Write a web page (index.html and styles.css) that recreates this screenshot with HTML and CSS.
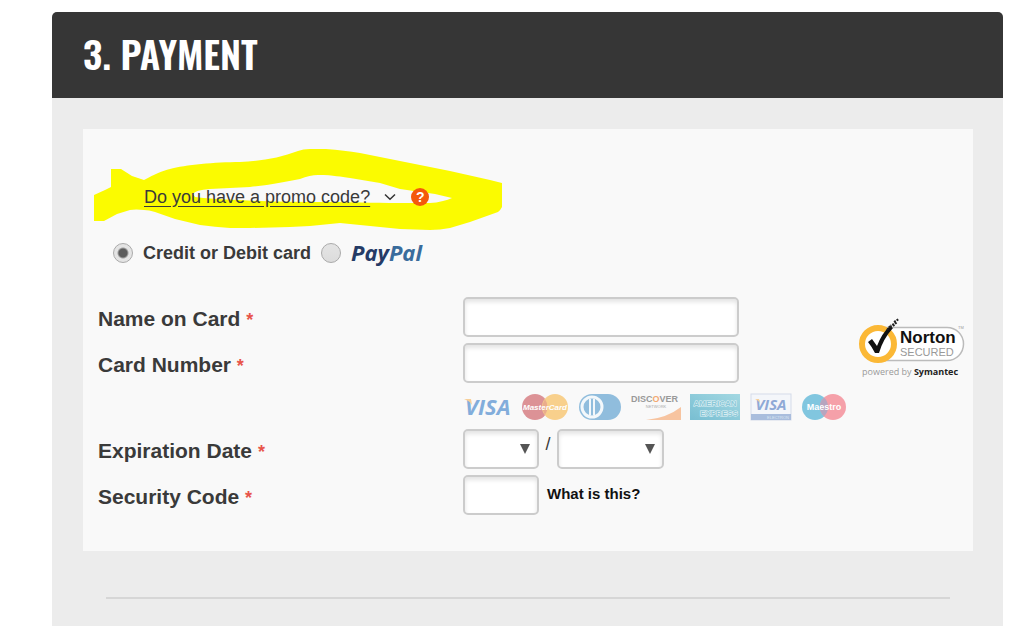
FILE: index.html
```html
<!DOCTYPE html>
<html lang="en">
<head>
    <meta charset="UTF-8">
    <meta name="viewport" content="width=device-width, initial-scale=1.0">
    <title>Checkout - Payment</title>
    <link rel="stylesheet" href="styles.css">
</head>
<body>
    <main class="checkout">
        <header class="step-header">
            <h1>3. PAYMENT</h1>
        </header>

        <div class="step-body">
            <form class="payment-box">
                <!-- Promo code -->
                <div class="promo">
                    <svg class="promo-marker" viewBox="94 149 409 82" width="409" height="82" aria-hidden="true">
                        <path fill="#fbfb00" fill-rule="evenodd" d="M94 195L105 190L111 187V169H121L132 176L144 180C155 174 162 171 170 169C185 165 215 162 240 162C260 161 280 158 298 151Q303 149 310 149C330 148 345 151 360 153L400 161L450 171L490 180L502 183V207Q500 211 498 212L470 222L450 228Q440 230 430 230L400 229L360 225L340 223L310 226L290 227L250 228L230 228Q215 227 200 225L175 219L155 212Q149 210 144 210Q136 209 130 210L117 214L104 221H94ZM193 194Q195 190 210 189L250 187C270 185 285 182 300 179Q310 175 318 175C335 175 340 177 350 178L380 183L400 189L435 194L452 198Q448 200 443 201Q436 203 430 203H400C370 203 350 202 330 202C300 202 270 202 240 200Q210 199 195 197Z"/>
                    </svg>
                    <a href="#" class="promo-link">Do you have a promo code?</a>
                    <svg class="promo-arrow" viewBox="0 0 12 8" width="12" height="8" aria-hidden="true">
                        <path d="M1 1.5L6 6.2L11 1.5" fill="none" stroke="#333" stroke-width="1.5"/>
                    </svg>
                    <button type="button" class="help" aria-label="Promo code help">?</button>
                </div>

                <!-- Payment method -->
                <div class="methods">
                    <input type="radio" name="method" id="method-card" checked>
                    <label for="method-card">Credit or Debit card</label>
                    <input type="radio" name="method" id="method-paypal">
                    <label for="method-paypal" class="paypal"><span>Pay</span><span class="pal">Pal</span></label>
                </div>

                <div class="details">
                    <div class="fields">
                        <div class="row">
                            <label class="row-label" for="card-name">Name on Card <span class="required">*</span></label>
                            <input class="field wide" type="text" id="card-name">
                        </div>
                        <div class="row">
                            <label class="row-label" for="card-number">Card Number <span class="required">*</span></label>
                            <input class="field wide" type="text" id="card-number">
                        </div>
                        <div class="row">
                            <span class="row-label"></span>
                            <div class="cards">
                                <!-- Visa -->
                                <svg viewBox="0 0 50 28" width="50" height="28">
                                    <text x="2" y="22" class="visa" font-size="22">VISA</text>
                                    <path d="M1 6H8L9 12Q7 8 1 6Z" fill="#f7cf98"/>
                                </svg>
                                <!-- MasterCard -->
                                <svg viewBox="0 0 46 28" width="46" height="28">
                                    <circle cx="13" cy="14" r="13" fill="#dc9296"/>
                                    <circle cx="33" cy="14" r="13" fill="#f8d08c"/>
                                    <path d="M23 6Q28 14 23 22Q18 14 23 6Z" fill="#eaad8c"/>
                                    <text x="23" y="17" class="card-name" font-size="8" font-style="italic">MasterCard</text>
                                </svg>
                                <!-- Diners Club -->
                                <svg viewBox="0 0 44 28" width="44" height="28">
                                    <path d="M14 1H30A13 13 0 0 1 30 27H14A13 13 0 0 1 14 1Z" fill="#90bddd"/>
                                    <circle cx="14" cy="14" r="10" fill="#90bddd" stroke="#f3f8fb" stroke-width="3"/>
                                    <path d="M12 6V22M16 6V22" stroke="#f3f8fb" stroke-width="2"/>
                                </svg>
                                <!-- Discover -->
                                <svg viewBox="0 0 50 28" width="50" height="28">
                                    <text x="0" y="9" class="discover" font-size="9">DISC<tspan fill="#f3aa72">O</tspan>VER</text>
                                    <text x="25" y="15" font-size="4" fill="#aaa" text-anchor="middle">NETWORK</text>
                                    <path d="M15 27Q36 25 50 14V27Z" fill="#f7c4a0"/>
                                </svg>
                                <!-- American Express -->
                                <svg viewBox="0 0 50 28" width="50" height="28">
                                    <defs>
                                        <linearGradient id="amex" x1="0" x2="1" y1="1" y2="0">
                                            <stop offset="0" stop-color="#78bed2"/>
                                            <stop offset="1" stop-color="#a3d8e2"/>
                                        </linearGradient>
                                    </defs>
                                    <rect y="1" width="50" height="26" fill="url(#amex)"/>
                                    <text x="25" y="13" class="amex" font-size="8">AMERICAN</text>
                                    <text x="29" y="23" class="amex" font-size="8">EXPRESS</text>
                                </svg>
                                <!-- Visa Electron -->
                                <svg viewBox="0 0 42 28" width="42" height="28">
                                    <rect x="1" y="1" width="40" height="26" fill="#f4f6fa" stroke="#d5dcea"/>
                                    <rect x="1" y="21" width="40" height="6" fill="#a9bddd"/>
                                    <text x="21" y="17" class="visa electron" font-size="15">VISA</text>
                                    <path d="M5 6H9L10 10Q8 7 5 6Z" fill="#f7cf98"/>
                                    <text x="28" y="26" font-size="4" fill="#dce6f2" text-anchor="middle">ELECTRON</text>
                                </svg>
                                <!-- Maestro -->
                                <svg viewBox="0 0 46 28" width="46" height="28">
                                    <circle cx="14" cy="14" r="13" fill="#81c6df"/>
                                    <circle cx="32" cy="14" r="13" fill="#f5a0a9"/>
                                    <path d="M23 4.6A13 13 0 0 1 23 23.4A13 13 0 0 1 23 4.6Z" fill="#b7a5bf"/>
                                    <text x="23" y="17" class="card-name" font-size="9">Maestro</text>
                                </svg>
                            </div>
                        </div>
                        <div class="row">
                            <label class="row-label" for="exp-month">Expiration Date <span class="required">*</span></label>
                            <select class="field short" id="exp-month" aria-label="Expiration month"><option></option></select>
                            <span class="slash">/</span>
                            <select class="field medium" aria-label="Expiration year"><option></option></select>
                        </div>
                        <div class="row">
                            <label class="row-label" for="security-code">Security Code <span class="required">*</span></label>
                            <input class="field short" type="text" id="security-code">
                            <a href="#" class="what">What is this?</a>
                        </div>
                    </div>

                    <svg class="norton" viewBox="0 0 108 62" width="108" height="62" role="img" aria-label="Norton Secured">
                        <path d="M19 10.5H89A16.5 16.5 0 0 1 89 43.5H19Z" fill="#fff" stroke="#bbb" stroke-width="1.5"/>
                        <circle cx="20" cy="27" r="16" fill="#fff" stroke="#fbb836" stroke-width="6"/>
                        <path d="M10 25L14 22L19 29Q24 16 32 9L35 11Q25 22 21 36H17Q14 30 10 25Z" fill="#111"/>
                        <path d="M29 13L33 8M32 10L37 6M35 9L39 5M36 5L41 2" stroke="#222" stroke-width="2" stroke-dasharray="2 1"/>
                        <text x="42" y="26" class="norton-name">Norton</text>
                        <text x="42" y="39" class="norton-secured">SECURED</text>
                        <text x="100" y="12" font-size="4" fill="#999">TM</text>
                        <text x="4" y="58" class="norton-by">powered by <tspan class="symantec">Symantec</tspan></text>
                    </svg>
                </div>
            </form>

            <hr class="divider">
        </div>
    </main>
</body>
</html>
```

FILE: styles.css
```css
* {
    margin: 0;
    padding: 0;
    box-sizing: border-box;
}

body {
    font-family: "Liberation Sans", Arial, sans-serif;
    font-size: 18px;
    color: #3a3a3a;
    background: #fff;
}

.checkout {
    margin: 12px 21px 0 52px;
    min-height: calc(100vh - 12px);
    background: #ececec;
    border-radius: 5px 5px 0 0;
}

.step-header {
    display: flex;
    align-items: center;
    height: 86px;
    padding: 0 31px 4px;
    background: #363636;
    border-radius: 5px 5px 0 0;
}

.step-header h1 {
    font-family: "Oswald", "Roboto Condensed", "Liberation Sans Narrow", "Liberation Sans", sans-serif;
    font-size: 38px;
    font-weight: 600;
    color: #fff;
}

.step-body {
    padding: 31px 30px 27px 31px;
}

.payment-box {
    display: flex;
    flex-direction: column;
    gap: 32px;
    padding: 56px 7px 36px 15px;
    background: #f9f9f9;
}

/* Promo code */
.promo {
    position: relative;
    display: flex;
    align-items: center;
    height: 24px;
    padding-left: 46px;
}

.promo-marker {
    position: absolute;
    top: -36px;
    left: -4px;
}

.promo-link {
    position: relative;
    color: #3a3a3a;
    text-underline-offset: 3px;
}

.promo-arrow {
    position: relative;
    margin: 0 15px 0 14px;
}

.help {
    position: relative;
    width: 18px;
    height: 18px;
    border: 0;
    border-radius: 50%;
    background: #f4590b;
    color: #fff;
    font: bold 14px/18px "Liberation Sans", Arial, sans-serif;
}

/* Payment method */
.methods {
    display: flex;
    align-items: center;
    gap: 10px;
    height: 24px;
    padding-left: 15px;
    font-weight: bold;
}

.methods input {
    appearance: none;
    width: 20px;
    height: 20px;
    border: 1px solid #aaa;
    border-radius: 50%;
    background: linear-gradient(#e4e4e4, #dcdcdc);
}

.methods input:checked {
    background: radial-gradient(circle, #5c5c5c 4px, #e4e4e4 6px);
}

.paypal {
    padding-bottom: 3px;
    font-family: "Open Sans", sans-serif;
    font-size: 22px;
    font-weight: bold;
    font-style: italic;
    line-height: 24px;
    color: #253b66;
}

.pal {
    color: #3a6c9c;
}

/* Card details */
.details {
    display: flex;
    align-items: flex-start;
    justify-content: space-between;
}

.fields {
    flex: 1;
    display: flex;
    flex-direction: column;
    gap: 6px;
}

.row {
    display: flex;
    align-items: center;
}

.row-label {
    flex: 0 0 365px;
    padding-top: 4px;
    font-size: 21px;
    font-weight: bold;
}

.required {
    font-size: 18px;
    color: #e8544a;
}

.field {
    height: 40px;
    padding: 0 10px;
    border: 2px solid #ccc;
    border-radius: 5px;
    background: #fff;
    box-shadow: inset 0 3px 4px #e4e4e4;
    font: 18px "Liberation Sans", Arial, sans-serif;
    color: #3a3a3a;
}

.wide {
    width: 276px;
}

.medium {
    width: 107px;
}

.short {
    width: 76px;
}

select.field {
    appearance: none;
    background: #fff url("data:image/svg+xml,%3Csvg xmlns='http://www.w3.org/2000/svg' width='10' height='10'%3E%3Cpath d='M0 0H10L5 10Z' fill='%23555'/%3E%3C/svg%3E") no-repeat right 7px center;
}

.slash {
    width: 18px;
    padding-bottom: 10px;
    font-size: 18px;
    text-align: center;
}

.what {
    padding: 0 0 4px 8px;
    font-size: 15px;
    font-weight: bold;
    color: #111;
    text-decoration: none;
}

.cards {
    display: flex;
    align-items: center;
    justify-content: space-between;
    width: 384px;
    height: 34px;
    padding-top: 2px;
}

.visa {
    font-family: "Open Sans", sans-serif;
    font-weight: bold;
    font-style: italic;
    fill: #82addb;
}

.electron {
    fill: #8fa9d6;
    text-anchor: middle;
}

.card-name {
    font-weight: bold;
    fill: #fff;
    text-anchor: middle;
}

.discover {
    font-weight: bold;
    fill: #999;
}

.amex {
    font-weight: bold;
    fill: #8bc8d8;
    stroke: #e2f3f6;
    stroke-width: 1px;
    paint-order: stroke;
    text-anchor: middle;
}

/* Norton seal */
.norton {
    flex: none;
    margin-top: 20px;
}

.norton-name {
    font-size: 17px;
    font-weight: bold;
    fill: #111;
}

.norton-secured {
    font-size: 11px;
    fill: #999;
}

.norton-by {
    font-family: "Open Sans", sans-serif;
    font-size: 9px;
    fill: #999;
}

.symantec {
    font-weight: bold;
    fill: #222;
}

.divider {
    margin: 46px 23px 0;
    border: 0;
    border-top: 2px solid #d6d6d6;
}
```
